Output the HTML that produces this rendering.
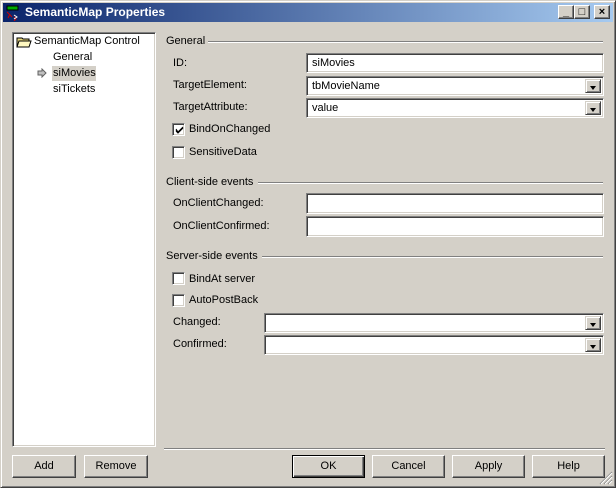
<!DOCTYPE html>
<html><head><style>
*{box-sizing:border-box;margin:0;padding:0}
body{width:616px;height:488px;background:#d4d0c8;font-family:"Liberation Sans",sans-serif;font-size:11px;color:#000;position:relative;overflow:hidden}
.a{position:absolute;white-space:nowrap}
.frame{position:absolute;left:0;top:0;width:616px;height:488px;border:1px solid;border-color:#d4d0c8 #404040 #404040 #d4d0c8;box-shadow:inset 1px 1px #fff,inset -1px -1px #808080}
.title{position:absolute;left:3px;top:3px;width:610px;height:19px;background:linear-gradient(to right,#0a246a,#a6caf0);color:#fff;font-weight:bold;font-size:12px;line-height:19px;padding-left:22px}
.tb{position:absolute;top:5px;width:16px;height:14px;background:#d4d0c8;border:1px solid;border-color:#fff #404040 #404040 #fff;box-shadow:inset -1px -1px #808080;color:#000;font-size:11px;line-height:12px;text-align:center;font-weight:bold}
.sunk{position:absolute;background:#fff;border:1px solid;border-color:#808080 #fff #fff #808080;box-shadow:inset 1px 1px #404040,inset -1px -1px #d4d0c8}
.txt{padding:3px 0 0 5px}
.dd{position:absolute;right:2px;top:2px;width:16px;bottom:2px;background:#d4d0c8;border:1px solid;border-color:#d4d0c8 #404040 #404040 #d4d0c8;box-shadow:inset 1px 1px #fff,inset -1px -1px #808080}
.dd:after{content:"";position:absolute;left:4px;top:6px;border-left:3.5px solid transparent;border-right:3.5px solid transparent;border-top:4px solid #000}
.lbl{position:absolute;line-height:13px}
.hr{position:absolute;height:2px;border-top:1px solid #808080;border-bottom:1px solid #fff}
.cb{position:absolute;width:13px;height:13px;background:#fff;border:1px solid;border-color:#808080 #fff #fff #808080;box-shadow:inset 1px 1px #404040,inset -1px -1px #d4d0c8}
.btn{position:absolute;height:23px;border:1px solid;border-color:#fff #404040 #404040 #fff;box-shadow:inset -1px -1px #808080;text-align:center;line-height:21px;background:#d4d0c8}
</style></head><body>
<div class="frame"></div>
<div class="title">SemanticMap Properties</div>
<svg class="a" style="left:5px;top:5px" width="16" height="16"><rect x="2" y="1" width="11" height="4" fill="#0a0" stroke="#000" stroke-width="1"/><path d="M2 7 L7 12 M5 9 L3 13 M9 12 L11 14 L9 16" stroke="#c00" fill="none"/><path d="M9 10 L12 12 L9 14" stroke="#fff" fill="none"/></svg>
<div class="tb" style="left:558px">_</div>
<div class="tb" style="left:574px;">□</div>
<div class="tb" style="left:594px">×</div>

<div class="sunk" style="left:12px;top:32px;width:144px;height:415px"></div>
<svg class="a" style="left:16px;top:35px" width="16" height="14"><path d="M1 3h5l1 1h6v8H1z" fill="#e8d87c" stroke="#000"/><path d="M1 12l2-6h12l-2 6z" fill="#fff8c0" stroke="#000"/></svg>
<div class="lbl" style="left:34px;top:35px">SemanticMap Control</div>
<div class="lbl" style="left:53px;top:51px">General</div>
<div class="a" style="left:52px;top:66px;width:44px;height:15px;background:#d4d0c8"></div>
<div class="lbl" style="left:53px;top:67px">siMovies</div>
<svg class="a" style="left:37px;top:68px" width="10" height="10"><path d="M1 3h4V1l4 4-4 4V7H1z" fill="#c0c0c0" stroke="#606060"/></svg>
<div class="lbl" style="left:53px;top:83px">siTickets</div>

<div class="lbl" style="left:166px;top:35px">General</div>
<div class="hr" style="left:208px;top:41px;width:395px"></div>
<div class="lbl" style="left:173px;top:57px">ID:</div>
<div class="sunk" style="left:306px;top:53px;width:298px;height:20px"><div class="txt">siMovies</div></div>
<div class="lbl" style="left:173px;top:79px">TargetElement:</div>
<div class="sunk" style="left:306px;top:76px;width:298px;height:20px"><div class="txt">tbMovieName</div><div class="dd"></div></div>
<div class="lbl" style="left:173px;top:101px">TargetAttribute:</div>
<div class="sunk" style="left:306px;top:98px;width:298px;height:20px"><div class="txt">value</div><div class="dd"></div></div>
<div class="cb" style="left:172px;top:123px"><svg width="11" height="11" style="position:absolute;left:1px;top:1px"><path d="M2 4l2 3 5-5M2 5l2 3 5-5M2 6l2 2 5-5" stroke="#000" fill="none"/></svg></div>
<div class="lbl" style="left:189px;top:123px">BindOnChanged</div>
<div class="cb" style="left:172px;top:146px"></div>
<div class="lbl" style="left:189px;top:146px">SensitiveData</div>

<div class="lbl" style="left:166px;top:176px">Client-side events</div>
<div class="hr" style="left:258px;top:182px;width:345px"></div>
<div class="lbl" style="left:173px;top:197px">OnClientChanged:</div>
<div class="sunk" style="left:306px;top:193px;width:298px;height:21px"></div>
<div class="lbl" style="left:173px;top:220px">OnClientConfirmed:</div>
<div class="sunk" style="left:306px;top:216px;width:298px;height:21px"></div>

<div class="lbl" style="left:166px;top:250px">Server-side events</div>
<div class="hr" style="left:262px;top:256px;width:341px"></div>
<div class="cb" style="left:172px;top:272px"></div>
<div class="lbl" style="left:189px;top:273px">BindAt server</div>
<div class="cb" style="left:172px;top:294px"></div>
<div class="lbl" style="left:189px;top:294px">AutoPostBack</div>
<div class="lbl" style="left:173px;top:316px">Changed:</div>
<div class="sunk" style="left:264px;top:313px;width:340px;height:20px"><div class="dd"></div></div>
<div class="lbl" style="left:173px;top:338px">Confirmed:</div>
<div class="sunk" style="left:264px;top:335px;width:340px;height:20px"><div class="dd"></div></div>

<div class="hr" style="left:164px;top:448px;width:441px"></div>
<div class="btn" style="left:12px;top:455px;width:64px">Add</div>
<div class="btn" style="left:84px;top:455px;width:64px">Remove</div>
<div class="btn" style="left:292px;top:455px;width:73px;border:1px solid #000;box-shadow:inset 1px 1px #fff,inset -1px -1px #404040,inset -2px -2px #808080">OK</div>
<div class="btn" style="left:372px;top:455px;width:73px">Cancel</div>
<div class="btn" style="left:452px;top:455px;width:73px">Apply</div>
<div class="btn" style="left:532px;top:455px;width:73px">Help</div>
<svg class="a" style="left:599px;top:471px" width="14" height="14"><path d="M13 1L1 13M13 5L5 13M13 9L9 13" stroke="#808080"/><path d="M13 2L2 13M13 6L6 13M13 10L10 13" stroke="#fff"/></svg>
</body></html>
